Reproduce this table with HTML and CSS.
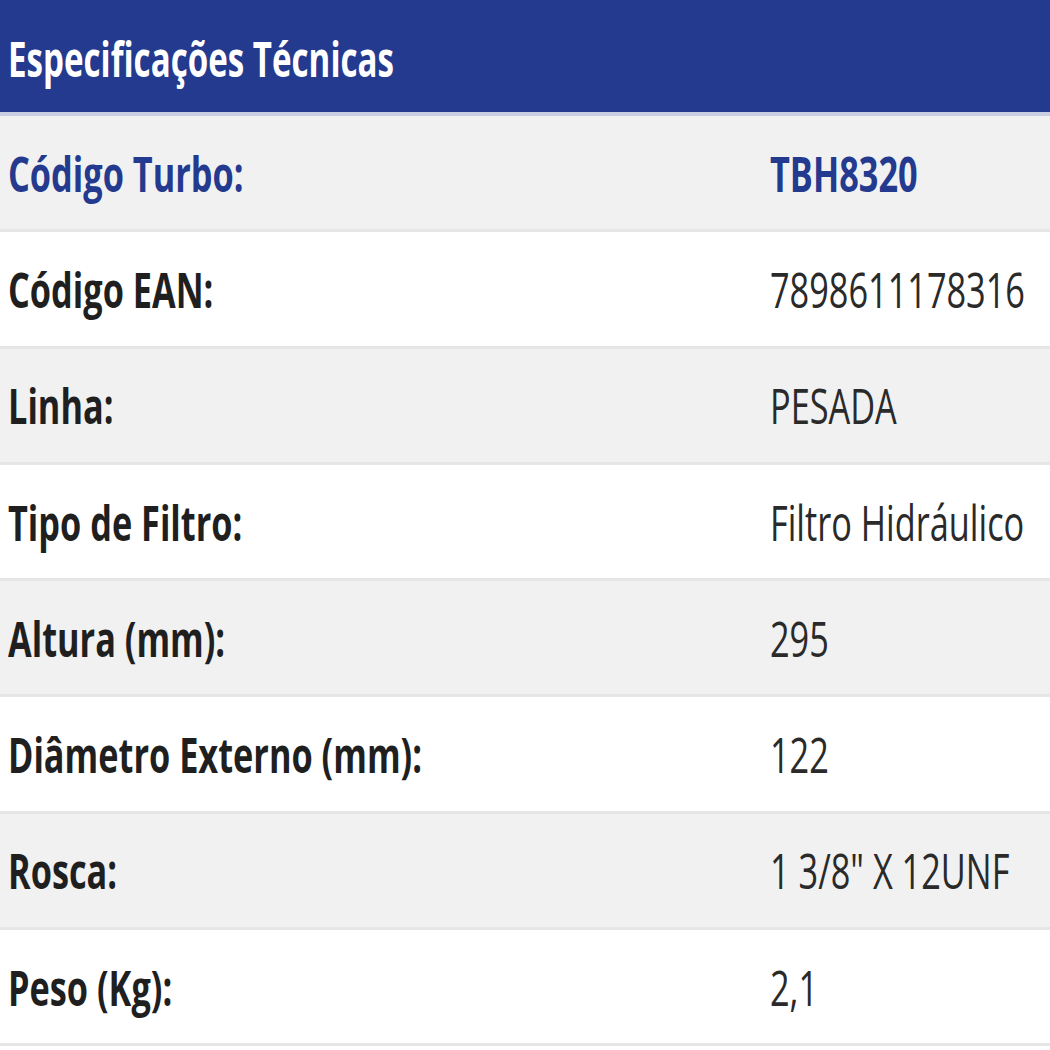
FILE: index.html
```html
<!DOCTYPE html>
<html lang="pt-BR">
<head>
<meta charset="utf-8">
<title>Especificações Técnicas</title>
<link rel="stylesheet" href="styles.css">
</head>
<body>
<section class="specs">
  <header class="specs-head"><span class="sq head-text">Especificações Técnicas</span></header>
  <div class="row alt first">
    <div class="label"><span class="sq">Código Turbo:</span></div>
    <div class="value"><span class="sq">TBH8320</span></div>
  </div>
  <div class="row">
    <div class="label"><span class="sq">Código EAN:</span></div>
    <div class="value"><span class="sq">7898611178316</span></div>
  </div>
  <div class="row alt">
    <div class="label"><span class="sq">Linha:</span></div>
    <div class="value"><span class="sq">PESADA</span></div>
  </div>
  <div class="row">
    <div class="label"><span class="sq">Tipo de Filtro:</span></div>
    <div class="value"><span class="sq">Filtro Hidráulico</span></div>
  </div>
  <div class="row alt">
    <div class="label"><span class="sq">Altura (mm):</span></div>
    <div class="value"><span class="sq">295</span></div>
  </div>
  <div class="row">
    <div class="label"><span class="sq">Diâmetro Externo (mm):</span></div>
    <div class="value"><span class="sq">122</span></div>
  </div>
  <div class="row alt">
    <div class="label"><span class="sq">Rosca:</span></div>
    <div class="value"><span class="sq">1 3/8" X 12UNF</span></div>
  </div>
  <div class="row">
    <div class="label"><span class="sq">Peso (Kg):</span></div>
    <div class="value"><span class="sq">2,1</span></div>
  </div>
</section>
</body>
</html>
```
FILE: styles.css
```css
html, body {
  margin: 0;
  padding: 0;
  background: #ffffff;
}
body {
  font-family: "Open Sans", "Noto Sans", "Liberation Sans", sans-serif;
  overflow: hidden;
}
.specs {
  width: 1050px;
  overflow: hidden;
}
.sq {
  display: inline-block;
  white-space: nowrap;
  transform: scaleX(0.7);
  transform-origin: left center;
}
.sq.head-text {
  transform: scaleX(0.676);
}
.specs-head {
  box-sizing: border-box;
  height: 116px;
  background: #233a8f;
  border-bottom: 4px solid #c9cfe2;
  color: #ffffff;
  font-weight: 700;
  font-size: 49px;
  display: flex;
  align-items: center;
  padding-left: 8px;
  padding-top: 4px;
  overflow: hidden;
}
.row {
  box-sizing: border-box;
  height: 116.3px;
  display: grid;
  grid-template-columns: 762px 288px;
  align-items: center;
  background: #ffffff;
  border-bottom: 3px solid #e6e6e6;
  font-size: 49px;
  color: #1f1f1f;
  overflow: hidden;
}
.row.alt {
  background: #f1f1f1;
}
.label {
  padding-left: 8px;
  font-weight: 700;
  overflow: hidden;
}
.value {
  padding-left: 8px;
  font-weight: 400;
  color: #2a2a2a;
  overflow: hidden;
}
.row.first .label,
.row.first .value {
  color: #233a8f;
  font-weight: 700;
}
```
